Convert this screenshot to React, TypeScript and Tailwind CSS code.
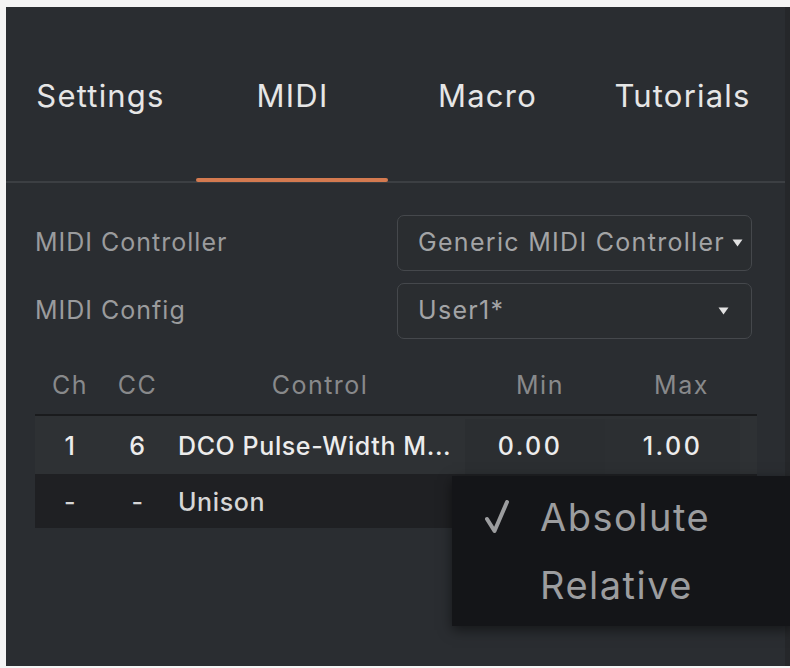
const tabs = [
  { name: "Settings", width: "w-[189px]" },
  { name: "MIDI", width: "w-[195px]", active: true },
  { name: "Macro", width: "w-[195px]" },
  { name: "Tutorials", width: "w-[195px]" },
];

function Caret() {
  return (
    <svg width="11" height="8" viewBox="0 0 11 8" className="flex-shrink-0">
      <path d="M0.5 0.5 L10.5 0.5 L5.5 7.5 Z" fill="#e2e2e2" />
    </svg>
  );
}

function Select({ value, padRight }: { value: string; padRight: string }) {
  return (
    <div
      className={`flex items-center justify-between w-[355px] h-[56px] pl-[20px] ${padRight} rounded-[7px] border-[1.5px] border-[#45484c] bg-[#2a2d30] overflow-hidden`}
    >
      <span className="text-[25px] text-[#a3a4a6] whitespace-nowrap tracking-[1.3px]">{value}</span>
      <Caret />
    </div>
  );
}

function Tick() {
  return (
    <svg width="24" height="34" viewBox="0 0 24 34" className="flex-shrink-0">
      <path
        d="M2 19 L9.5 31 L22 2"
        fill="none"
        stroke="#9c9d9f"
        strokeWidth="4"
        strokeLinecap="round"
        strokeLinejoin="round"
      />
    </svg>
  );
}

export default function App() {
  return (
    <div
      className="w-[790px] h-[668px] bg-[#f4f4f4] pt-[7px] pl-[6px] overflow-hidden"
      style={{ fontFamily: "Inter, 'Noto Sans', sans-serif" }}
    >
      <div className="relative h-[659px] bg-[#2a2d31] border-r-[5px] border-[#25272a]">
        {/* Tabs */}
        <div className="flex h-[174px] items-center pt-[4px]">
          {tabs.map((t) => (
            <div
              key={t.name}
              className={`${t.width} text-center text-[31px] text-[#e6e6e6] tracking-[1.2px]`}
            >
              {t.name}
            </div>
          ))}
        </div>
        <div className="relative h-[2px] bg-[#3c3f43]">
          <div className="absolute left-[190px] top-[-3px] w-[192px] h-[4px] rounded-full bg-[#d47a50]" />
        </div>

        {/* Form */}
        <div className="flex flex-col gap-[12px] pt-[32px] pl-[29px]">
          <div className="flex items-center">
            <span className="w-[362px] text-[25px] text-[#9a9b9d] tracking-[1px]">MIDI Controller</span>
            <Select value="Generic MIDI Controller" padRight="pr-[8px]" />
          </div>
          <div className="flex items-center">
            <span className="w-[362px] text-[25px] text-[#9a9b9d] tracking-[1px]">MIDI Config</span>
            <Select value="User1*" padRight="pr-[22px]" />
          </div>
        </div>

        {/* Table */}
        <div className="ml-[29px] w-[722px] mt-[15px]">
          <div className="flex h-[62px] items-center pt-[3px] text-[25px] text-[#88898b] tracking-[1.5px] border-b-[2px] border-[#1a1b1d]">
            <span className="w-[70px] text-center">Ch</span>
            <span className="w-[65px] text-center">CC</span>
            <span className="w-[300px] text-center">Control</span>
            <span className="w-[140px] text-center">Min</span>
            <span className="w-[135px] text-center pl-[8px]">Max</span>
          </div>
          <div className="flex h-[58px] items-center pt-[3px] text-[25px] font-medium text-[#ececec] bg-[#2e3134] tracking-[0.6px]">
            <span className="w-[70px] text-center">1</span>
            <span className="w-[65px] text-center">6</span>
            <span className="w-[295px] pl-[8px] whitespace-nowrap">DCO Pulse-Width M...</span>
            <span className="w-[140px] h-full flex items-center justify-center pr-[10px] bg-[#2b2e31] tracking-[2.5px]">0.00</span>
            <span className="w-[135px] h-full flex items-center justify-center bg-[#2c2f32] tracking-[2.5px]">1.00</span>
          </div>
          <div className="flex h-[54px] items-center pt-[4px] text-[25px] font-medium text-[#d6d6d6] bg-[#1f2023] tracking-[0.6px]">
            <span className="w-[70px] text-center">-</span>
            <span className="w-[65px] text-center">-</span>
            <span className="pl-[8px]">Unison</span>
          </div>
        </div>

        {/* Popup menu */}
        <div className="absolute left-[446px] top-[469px] w-[340px] h-[150px] bg-[#141518] shadow-[0_4px_12px_rgba(0,0,0,0.5)] flex flex-col justify-center gap-[30px] text-[38px] text-[#9c9d9f] tracking-[1.5px]">
          <div className="flex items-center">
            <span className="w-[88px] flex justify-end pr-[31px]">
              <Tick />
            </span>
            <span className="leading-none">Absolute</span>
          </div>
          <div className="flex items-center">
            <span className="w-[88px]" />
            <span className="leading-none">Relative</span>
          </div>
        </div>
      </div>
    </div>
  );
}
